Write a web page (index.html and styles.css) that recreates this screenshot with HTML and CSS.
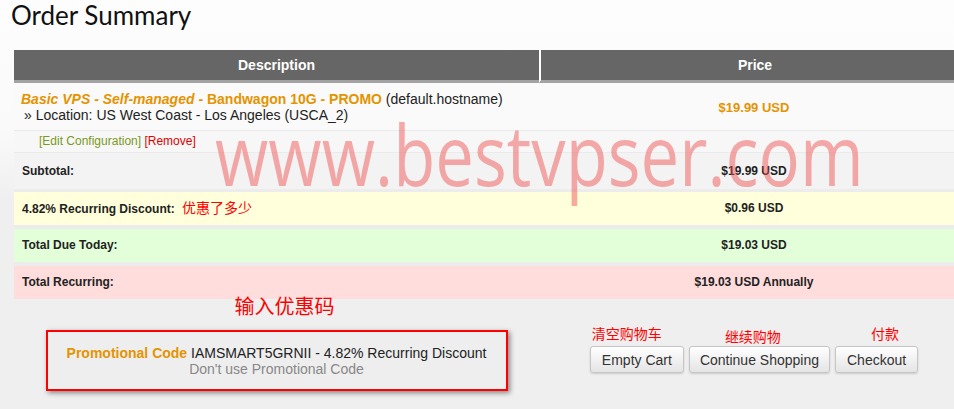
FILE: index.html
```html
<!DOCTYPE html>
<html lang="en">
<head>
    <meta charset="UTF-8">
    <meta name="viewport" content="width=device-width, initial-scale=1.0">
    <title>Order Summary</title>
    <link rel="stylesheet" href="styles.css">
</head>
<body>
    <h1 class="page-title">Order Summary</h1>

    <table class="cart">
        <thead>
            <tr>
                <th class="col-desc">Description</th>
                <th class="col-price">Price</th>
            </tr>
        </thead>
        <tbody>
            <tr class="product">
                <td>
                    <strong class="product-name"><em>Basic VPS - Self-managed</em> - Bandwagon 10G - PROMO</strong> (default.hostname)<br>
                    <span class="option">&raquo; Location: US West Coast - Los Angeles (USCA_2)</span>
                </td>
                <td class="amount orange">$19.99 USD</td>
            </tr>
            <tr class="config">
                <td><a class="edit">[Edit Configuration]</a> <a class="remove">[Remove]</a></td>
                <td></td>
            </tr>
            <tr class="subtotal">
                <td>Subtotal:</td>
                <td class="amount">$19.99 USD</td>
            </tr>
            <tr class="discount">
                <td>4.82% Recurring Discount: <span class="note">优惠了多少</span></td>
                <td class="amount">$0.96 USD</td>
            </tr>
            <tr class="due">
                <td>Total Due Today:</td>
                <td class="amount">$19.03 USD</td>
            </tr>
            <tr class="recurring">
                <td>Total Recurring:</td>
                <td class="amount">$19.03 USD Annually</td>
            </tr>
        </tbody>
    </table>

    <div class="checkout-row">
        <div class="promo-col">
            <div class="note big">输入优惠码</div>
            <div class="promo-box">
                <div><strong class="orange">Promotional Code</strong> IAMSMART5GRNII - 4.82% Recurring Discount</div>
                <div><a class="no-promo">Don't use Promotional Code</a></div>
            </div>
        </div>
        <div class="actions-col">
            <div class="btn-wrap">
                <span class="note tip tip-empty">清空购物车</span>
                <button>Empty Cart</button>
            </div>
            <div class="btn-wrap">
                <span class="note tip tip-continue">继续购物</span>
                <button class="btn-continue">Continue Shopping</button>
            </div>
            <div class="btn-wrap">
                <span class="note tip tip-pay">付款</span>
                <button>Checkout</button>
            </div>
        </div>
    </div>

    <!-- marca de agua -->
    <div class="watermark">www.bestvpser.com</div>
</body>
</html>
```

FILE: styles.css
```css
html {
    overflow: hidden;
}
body {
    margin: 0;
    position: relative;
    width: 954px;
    height: 409px;
    font-family: "Liberation Sans", Arial, sans-serif;
    font-size: 14px;
    color: #222;
    background: linear-gradient(#fdfdfd 0, #fafafa 130px, #efefef 200px, #efefef 100%);
}
.page-title {
    margin: 0 0 20px 11px;
    font-family: Lato, "Open Sans", sans-serif;
    font-weight: 400;
    font-size: 26px;
    line-height: 30px;
    color: #111;
}
.orange,
.product-name {
    color: #e49400;
}
.note {
    font-family: "Noto Sans CJK SC", sans-serif;
    color: #f00;
    font-size: 14px;
    font-weight: 400;
}

/* tabla */
.cart {
    margin-left: 14px;
    width: 955px;
    border-collapse: separate;
    border-spacing: 0;
    table-layout: fixed;
}
.cart th {
    background-color: #666;
    color: #fff;
    font-size: 14px;
    font-weight: bold;
    height: 30px;
    padding: 0;
    border-bottom: 3px solid #a3a3a3;
}
.cart .col-desc {
    width: 525px;
}
.cart .col-price {
    border-left: 2px solid #fff;
}
.cart td {
    padding: 0 8px;
    font-size: 12px;
    font-weight: bold;
    line-height: 15px;
    border-bottom: 1px solid #ebebeb;
}
.cart td.amount {
    text-align: center;
}
.product td {
    background-color: #fafafa;
    padding: 8px 7px 7px;
    font-size: 14px;
    font-weight: normal;
    line-height: 16px;
}
.product td.amount {
    font-weight: bold;
    font-size: 13px;
    padding-top: 10px;
}
.product .option {
    padding-left: 3px;
}
.config td {
    background-color: #f7f7f7;
    height: 21px;
    padding: 0 0 0 25px;
    font-weight: normal;
}
.config .edit {
    color: #7a9a1e;
}
.config .remove {
    color: #d00;
}
.subtotal td {
    background-color: #f3f3f3;
    height: 36px;
    padding-top: 0;
    padding-bottom: 0;
    border-bottom: 3px solid #ececec;
}
.discount td,
.due td,
.recurring td {
    height: 33px;
    padding-top: 0;
    padding-bottom: 0;
    border-bottom: 4px solid #ececec;
}
.discount td {
    background-color: #ffffdb;
}
.discount .note {
    margin-left: 4px;
}
.due td {
    background-color: #e2ffd9;
}
.recurring td {
    background-color: #ffdddd;
    border-bottom: none;
}

/* parte inferior */
.checkout-row {
    display: flex;
    margin-left: 14px;
    width: 955px;
}
.promo-col {
    width: 525px;
    display: flex;
    flex-direction: column;
    align-items: center;
}
.note.big {
    font-size: 20px;
    line-height: 26px;
    margin: -6px 0 11px 16px;
}
.promo-box {
    width: 458px;
    height: 57px;
    border: 2px solid #f00;
    background-color: #eeeeee;
    box-shadow: 2px 2px 5px rgba(0, 0, 0, 0.45);
    text-align: center;
    font-size: 14px;
    line-height: 16px;
    display: flex;
    flex-direction: column;
    justify-content: center;
}
.no-promo {
    color: #888;
}
.actions-col {
    flex: 1;
    display: flex;
    justify-content: center;
    align-items: flex-end;
    gap: 5px;
    padding-bottom: 18px;
}
.btn-wrap {
    position: relative;
}
button {
    height: 27px;
    padding: 0 11px;
    font-family: "Liberation Sans", Arial, sans-serif;
    font-size: 14px;
    color: #333;
    background: linear-gradient(#ffffff, #e4e4e4);
    border: 1px solid #c6c6c6;
    border-radius: 3px;
    box-shadow: 0 1px 2px rgba(0, 0, 0, 0.15);
}
button.btn-continue {
    padding: 0 10px;
}
.tip {
    position: absolute;
    bottom: 100%;
    line-height: 20px;
    white-space: nowrap;
}
.tip-empty {
    left: 2px;
    margin-bottom: 3px;
}
.tip-continue {
    left: 36px;
    margin-bottom: 0;
}
.tip-pay {
    left: 36px;
    margin-bottom: 3px;
}

.watermark {
    position: absolute;
    left: 215px;
    top: 111px;
    font-family: "Open Sans", sans-serif;
    font-size: 85px;
    line-height: 1;
    color: rgba(240, 80, 80, 0.48);
    white-space: nowrap;
    transform: scaleX(0.81);
    transform-origin: left top;
    pointer-events: none;
}
```
